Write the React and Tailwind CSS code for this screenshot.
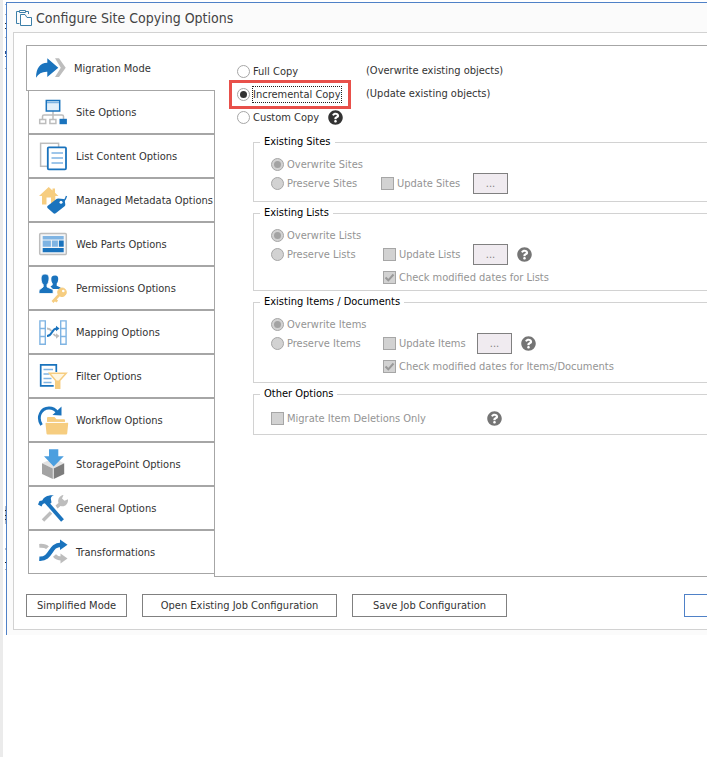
import React, { useState } from 'react';
import { FaQuestionCircle } from 'react-icons/fa';

const BLUE = '#1a73bd';
const LIGHT = '#7fb4e3';
const GREY = '#bdbdbd';
const SAND = '#f6cd80';

function Icon({ children }) {
    return (
        <svg className="size-8 shrink-0" viewBox="0 0 32 32" fill="none" aria-hidden="true">
            {children}
        </svg>
    );
}

const icons = {
    migration: (
        <>
            <path d="M20 6.3h4l6.7 9.4L24 25h-4l5.8-9.3z" fill={GREY} />
            <path d="M1 25.7C1.2 16 5 11 12.3 10.7V6.3l11 9.4-11 9.3v-5.3C7 19.5 3.5 21.5 1 25.7z" fill={BLUE} />
        </>
    ),
    site: (
        <>
            <path d="M16 15v8M5.5 23v-2.5q0-1.5 1.5-1.5h18q1.5 0 1.5 1.5V23" stroke={GREY} strokeWidth="1.5" />
            <rect x="9.3" y="4.5" width="13.4" height="10.5" fill="#e3f0fa" stroke={BLUE} strokeWidth="1.5" />
            <path d="M10 6.5h12" stroke={LIGHT} strokeWidth="1.5" />
            <rect x="2.7" y="23.5" width="6" height="4" fill="#fff" stroke={GREY} strokeWidth="1.5" />
            <rect x="12.9" y="23.5" width="6" height="4" fill="#fff" stroke={GREY} strokeWidth="1.5" />
            <rect x="22.5" y="22.8" width="7.4" height="5.4" fill={BLUE} />
        </>
    ),
    list: (
        <>
            <rect x="3.6" y="3.3" width="18" height="23" stroke={GREY} strokeWidth="1.5" />
            <rect x="10.8" y="7.3" width="18.2" height="22" rx="1" fill="#fff" stroke={BLUE} strokeWidth="1.8" />
            <path d="M14.5 13H26M14.5 18H26M14.5 23H26" stroke={LIGHT} strokeWidth="1.6" />
        </>
    ),
    metadata: (
        <>
            <path d="M11.7 3 2 12h3v8.5h4.5v-7H14v7h4.3V12h3.2L18 8.7V4.5h-2.5v2z" fill={SAND} />
            <path d="M24 18.5c3.5-.5 4.5-3 5.5-6.5" stroke={BLUE} strokeWidth="1.3" />
            <path
                d="M10.8 21.8 19.5 15q.8-.6 1.8-.5l5 .5q1.2.1 1.4 1.3l.6 4.2q.1 1-.7 1.7l-8.9 7q-1.4 1-2.5-.3l-5.7-5q-1-1.2.3-2.1z"
                fill={BLUE}
            />
            <circle cx="24" cy="18.3" r="1.5" fill="#fff" />
        </>
    ),
    webparts: (
        <>
            <rect x="2.7" y="5.5" width="26.6" height="21" rx="1" fill="#f4f6f8" stroke={GREY} strokeWidth="1.5" />
            <path d="M5.7 8h21v3.4h-21zM5.7 12.6h8.2v6.2H5.7zM14.9 12.6h6v6.2h-6z" fill={LIGHT} />
            <path d="M21.9 12.6h4.8v6.2h-4.8zM5.7 20h21v4.2h-21z" fill={BLUE} />
        </>
    ),
    permissions: (
        <>
            <path d="M18.2 3.5c2.3 0 3.2 1.5 3 3.7-.2 2.2-.7 3.5-1.5 4.3v2.3l3.8 1.7V17h-7.5l-2.5-2.5 2.2-1.5v-1.5c-.8-1-1.3-2.3-1.4-4.3-.2-2.2.8-3.7 3.9-3.7z" fill={BLUE} />
            <path
                d="M8 2c3.2 0 4.3 2 4 5-.2 2.7-.9 4.5-2 5.6V15l5.3 2.3q.8.4.8 1.5v2.7H2V19q0-1.1.8-1.5L6.2 15v-2.4C5 11.5 4.3 9.7 4.1 7 3.9 4 5 2 8 2z"
                fill={BLUE}
                stroke="#fff"
                strokeWidth=".8"
            />
            <path d="m22.5 22.5-7 7.5M18 27.5l2.2 2.2" stroke={SAND} strokeWidth="2.6" />
            <circle cx="25" cy="20.3" r="4.3" fill={SAND} stroke={SAND} />
            <circle cx="26.3" cy="19" r="1.3" fill="#fff" />
        </>
    ),
    mapping: (
        <>
            <path d="M2.9 4.9h5.4v23.3H2.9zM2.9 12.5h5.4M2.9 20.5h5.4M23.7 4.9h5.4v23.3h-5.4zM23.7 12.5h5.4M23.7 20.5h5.4" stroke={LIGHT} strokeWidth="1.4" />
            <path d="M10 12.5c3 0 3.5 1 4.5 2.5M16.5 18c1 1.5 1.5 2 3.5 2" stroke={GREY} strokeWidth="1.8" />
            <path d="m19 17.2 3.5 2.8-3.5 2.8z" fill={GREY} />
            <path d="M10 20c6 0 4-7.5 10-7.5" stroke={BLUE} strokeWidth="2" />
            <path d="m19 9.7 3.5 2.8-3.5 2.8z" fill={BLUE} />
        </>
    ),
    filter: (
        <>
            <path d="M19.3 12V4.9H3.7v21h13" stroke={BLUE} strokeWidth="1.7" />
            <path d="M6.5 9.5H16M6.5 14h6M6.5 18.5h8M6.5 22.5h8" stroke={LIGHT} strokeWidth="1.4" />
            <path d="M12.5 13.3h16.7l-6.5 7.2v7.8h-4v-7.8z" fill="#fff6e0" stroke={SAND} strokeWidth="1.5" />
            <path d="M18.3 20.5h4.4v8h-4.4z" fill={SAND} />
        </>
    ),
    workflow: (
        <>
            <path d="M4.5 21C-.5 13 4 4 12 4c4 0 6.7 1.8 8.5 4.5" stroke={BLUE} strokeWidth="2.8" />
            <path d="M24.5 2.5v9l-9-.5z" fill={BLUE} />
            <path d="M10 18v-4q0-1 1-1h6.5l2 2.2H27q1 0 1 1V18z" fill={SAND} />
            <path d="M9.3 18.8h21.2q.8 0 .7.8l-1 10q-.1.9-1 .9H10.5q-.9 0-1-.9l-1-10q0-.8.8-.8z" fill={SAND} />
            <path d="M9.5 18.4h20" stroke="#fff" strokeWidth=".8" />
        </>
    ),
    storage: (
        <>
            <path d="M5 15.3 10 13h12.5l4.7 2.3L16.3 21z" fill="#e3e3e3" />
            <path d="M5 15.3 15.8 20.5V31L5 26z" fill="#a3a3a3" />
            <path d="m27.2 15.3-10.5 5.2V31l10.5-5z" fill="#7d7d7d" />
            <path d="M12 1.3h9.3v7h5.5L16.7 18.5 7 8.3h5z" fill="#4c9fdf" />
        </>
    ),
    general: (
        <>
            <path d="m6 28.5 8-8" stroke={GREY} strokeWidth="3.4" />
            <path d="M18.5 13.5 21.5 11q-1.5-5 3.5-7.8l1.5-.2L25 6.5l2.5 2.3L31 7.3c.5 5-3.5 8.2-7.5 6.7l-3 2.5z" fill={GREY} />
            <path d="m11.5 12.5 14 16" stroke={BLUE} strokeWidth="3.8" />
            <path d="M1 12.5 2.5 9l2.7-.5C7 5 10.5 2.8 17 3.3c-2 .7-3 1.8-3.2 3.2l.7 4-4 3.8-2.7-3-2 .7-1.3 2.5z" fill={BLUE} />
        </>
    ),
    transformations: (
        <>
            <path d="M2.3 9.8c4.5-.3 6.5.2 8.2 2M17.5 19.5c2 2.5 3.5 3 7 3" stroke={GREY} strokeWidth="3.8" />
            <path d="m23.5 17.5 7 5-7 5z" fill={GREY} />
            <path d="M2.3 22.7C15 23.5 12 8.7 24 8.7" stroke={BLUE} strokeWidth="4.4" />
            <path d="m23 3.5 7.5 5.2L23 14z" fill={BLUE} />
        </>
    ),
};

const tabs = [
    { id: 'site', label: 'Site Options' },
    { id: 'list', label: 'List Content Options' },
    { id: 'metadata', label: 'Managed Metadata Options' },
    { id: 'webparts', label: 'Web Parts Options' },
    { id: 'permissions', label: 'Permissions Options' },
    { id: 'mapping', label: 'Mapping Options' },
    { id: 'filter', label: 'Filter Options' },
    { id: 'workflow', label: 'Workflow Options' },
    { id: 'storage', label: 'StoragePoint Options' },
    { id: 'general', label: 'General Options' },
    { id: 'transformations', label: 'Transformations' },
];

function Radio({ label, focused, ...props }) {
    return (
        <label className="flex items-center gap-0.5 whitespace-nowrap has-disabled:text-[#949494]">
            <input
                type="radio"
                className="grid size-[13px] shrink-0 appearance-none place-items-center rounded-full border border-[#a6a6a6] bg-white before:size-[7px] before:rounded-full checked:before:bg-[#333] disabled:bg-[#d2d2d2] disabled:checked:before:bg-[#a3a3a3]"
                {...props}
            />
            <span className={focused ? 'border border-dotted border-[#222] leading-[15px]' : 'border border-transparent leading-[15px]'}>
                {label}
            </span>
        </label>
    );
}

function Check({ label, className, ...props }) {
    return (
        <label className={`flex items-center gap-0.5 whitespace-nowrap text-[#949494] ${className}`}>
            <span className="grid shrink-0">
                <input
                    type="checkbox"
                    disabled
                    className="peer col-start-1 row-start-1 size-[13px] appearance-none border border-[#a6a6a6] bg-[#d2d2d2]"
                    {...props}
                />
                <svg viewBox="0 0 13 13" className="invisible col-start-1 row-start-1 size-[13px] peer-checked:visible" aria-hidden="true">
                    <path d="m2.5 6.5 2.8 2.8 5.2-5.8" fill="none" stroke="#999" strokeWidth="2" />
                </svg>
            </span>
            <span className="border border-transparent leading-[15px]">{label}</span>
        </label>
    );
}

function More() {
    return (
        <button type="button" disabled className="h-[21px] w-[35px] shrink-0 border border-[#808080] bg-[#f0ebf0] leading-[15px] text-[#808080]">
            ...
        </button>
    );
}

function Help({ className }) {
    return (
        <button type="button" className={className}>
            <FaQuestionCircle className="size-[15px]" />
        </button>
    );
}

function Group({ title, className, children }) {
    return (
        <fieldset className="mt-1 ml-4 border border-r-0 border-[#d2d2d2]">
            <legend className="ml-1.5 px-1 leading-[14px] text-black">{title}</legend>
            <div className={`pl-[17px] ${className}`}>{children}</div>
        </fieldset>
    );
}

function ActionButton({ className, children }) {
    return (
        <button type="button" className={`h-[23px] border bg-white pt-0.5 whitespace-nowrap ${className}`}>
            {children}
        </button>
    );
}

// Sliver of the window behind, visible along the left edge
function Backdrop() {
    return (
        <div className="flex w-[3px] shrink-0 flex-col items-end">
            <div className="mt-1 h-px w-px bg-[#8fb8e0]" />
            <div className="mt-[9px] h-px w-px bg-[#aaa]" />
            <div className="mt-2 h-px w-px bg-[#333]" />
            <div className="mt-1 h-px w-px bg-[#333]" />
            <div className="mt-2 h-px w-px bg-[#aaa]" />
            <div className="mt-[13px] h-[3px] w-px bg-[#2c4f8c]" />
            <div className="mt-0.5 h-px w-px bg-[#2c4f8c]" />
            <div className="mt-[11px] h-px w-px bg-[#aaa]" />
            <div className="mt-[437px] flex h-[18px] w-px flex-col justify-evenly bg-[#b5bcc8]">
                <div className="h-px bg-[#222]" />
                <div className="h-px bg-[#222]" />
                <div className="h-px bg-[#222]" />
            </div>
            <div className="mt-6 h-0.5 w-px bg-[#b5bcc8]" />
            <div className="mt-3 h-px w-px bg-[#222]" />
            <div className="mt-1.5 h-px w-px bg-[#aaa]" />
        </div>
    );
}

export default function App() {
    const [mode, setMode] = useState('incremental');
    const pick = (e) => setMode(e.target.value);

    return (
        <div className="flex min-h-screen overflow-hidden bg-white font-['DejaVu_Sans_Condensed','Noto_Sans',sans-serif] text-[11px] text-[#333]">
            <div className="w-[3px] shrink-0 bg-[#ebebeb]" />
            <Backdrop />
            <main className="mt-0.5 min-w-0 flex-1 self-start border-t border-l border-[#4f81c7] bg-[#fbfbfb] pb-[5px] pl-1.5">
                <header className="flex h-[29px] items-center gap-1 pl-[3px]">
                    <svg className="size-4 shrink-0" viewBox="0 0 16 16" fill="none" stroke="#3c7fa8" aria-hidden="true">
                        <path d="M3.5 13.5h-3v-12h3M10 1.5h2.5V4M3.5.5h6v2h-6z" />
                        <path d="M4.5 15.5v-11H9l2 3h4.5v8z" fill="#fff" />
                    </svg>
                    <h1 className="text-[14px] leading-5 whitespace-nowrap text-[#444]">Configure Site Copying Options</h1>
                </header>

                <div className="border border-r-0 border-[#d2d2d2] bg-white pt-3 pb-3 pl-3">
                    <div className="flex">
                        <nav className="relative z-10 flex w-[189px] shrink-0 flex-col">
                            <button type="button" className="-mb-px flex h-[46px] items-center gap-[7px] border border-r-0 border-[#a6a6a6] bg-white pl-2">
                                <Icon>{icons.migration}</Icon>
                                <span className="pt-0.5">Migration Mode</span>
                            </button>
                            {tabs.map((tab) => (
                                <button
                                    key={tab.id}
                                    type="button"
                                    className="ml-0.5 flex h-11 items-center gap-[7px] border border-[#a6a6a6] bg-white pl-2 whitespace-nowrap"
                                >
                                    <Icon>{icons[tab.id]}</Icon>
                                    <span className="pt-0.5">{tab.label}</span>
                                </button>
                            ))}
                        </nav>

                        <section className="-ml-px min-h-[532px] min-w-0 flex-1 border border-r-0 border-[#a6a6a6] pt-3.5 pl-[22px]">
                            <div className="mb-1.5">
                                <div className="flex h-[23px] items-center">
                                    <div className="w-[129px]">
                                        <Radio name="mode" value="full" label="Full Copy" checked={mode === 'full'} onChange={pick} />
                                    </div>
                                    <span>(Overwrite existing objects)</span>
                                </div>
                                <div className="relative flex h-[23px] items-center">
                                    <div className="w-[129px]">
                                        <Radio name="mode" value="incremental" label="Incremental Copy" focused checked={mode === 'incremental'} onChange={pick} />
                                    </div>
                                    <span>(Update existing objects)</span>
                                    <div className="pointer-events-none absolute -top-[3px] -left-2 h-[29px] w-[122px] border-3 border-[#e8504a]" />
                                </div>
                                <div className="flex h-[23px] items-center">
                                    <div className="w-[91px]">
                                        <Radio name="mode" value="custom" label="Custom Copy" checked={mode === 'custom'} onChange={pick} />
                                    </div>
                                    <Help className="text-[#333]" />
                                </div>
                            </div>

                            <Group title="Existing Sites" className="pt-1.5 pb-2">
                                <div className="flex h-[19px] items-center">
                                    <Radio name="sites" label="Overwrite Sites" disabled defaultChecked />
                                </div>
                                <div className="flex h-[19px] items-center">
                                    <div className="w-[110px]">
                                        <Radio name="sites" label="Preserve Sites" disabled />
                                    </div>
                                    <Check label="Update Sites" className="w-[92px]" />
                                    <More />
                                </div>
                            </Group>

                            <Group title="Existing Lists" className="pt-1.5 pb-[3px]">
                                <div className="flex h-[19px] items-center">
                                    <Radio name="lists" label="Overwrite Lists" disabled defaultChecked />
                                </div>
                                <div className="flex h-[19px] items-center">
                                    <div className="w-28">
                                        <Radio name="lists" label="Preserve Lists" disabled />
                                    </div>
                                    <Check label="Update Lists" className="w-[90px]" />
                                    <More />
                                    <Help className="ml-[9px] text-[#757575]" />
                                </div>
                                <Check label="Check modified dates for Lists" className="mt-1 ml-28 h-[19px]" defaultChecked />
                            </Group>

                            <Group title="Existing Items / Documents" className="pt-1.5 pb-1.5">
                                <div className="flex h-[19px] items-center">
                                    <Radio name="items" label="Overwrite Items" disabled defaultChecked />
                                </div>
                                <div className="flex h-[19px] items-center">
                                    <div className="w-28">
                                        <Radio name="items" label="Preserve Items" disabled />
                                    </div>
                                    <Check label="Update Items" className="w-[94px]" />
                                    <More />
                                    <Help className="ml-[9px] text-[#757575]" />
                                </div>
                                <Check label="Check modified dates for Items/Documents" className="mt-1 ml-28 h-[19px]" defaultChecked />
                            </Group>

                            <Group title="Other Options" className="pt-2 pb-1.5">
                                <div className="flex h-[19px] items-center">
                                    <Check label="Migrate Item Deletions Only" className="w-[216px]" />
                                    <Help className="text-[#757575]" />
                                </div>
                            </Group>
                        </section>
                    </div>

                    <footer className="mt-[17px] flex gap-[15px]">
                        <ActionButton className="w-[101px] border-[#808080]">Simplified Mode</ActionButton>
                        <ActionButton className="w-[195px] border-[#808080]">Open Existing Job Configuration</ActionButton>
                        <ActionButton className="w-[155px] border-[#808080]">Save Job Configuration</ActionButton>
                        <ActionButton className="ml-auto w-[23px] border-r-0 border-[#4f81c7]" />
                    </footer>
                </div>
            </main>
        </div>
    );
}
